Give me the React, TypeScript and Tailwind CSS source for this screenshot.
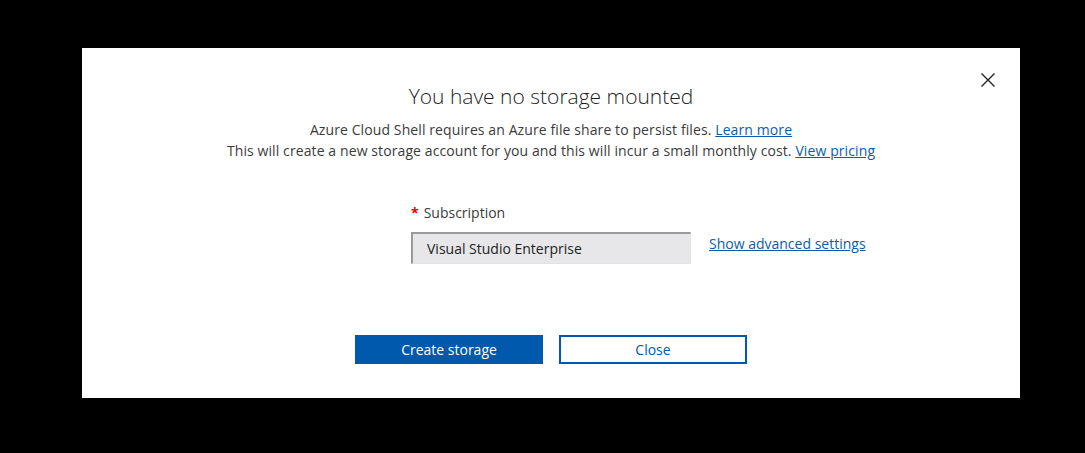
import { useState } from 'react';

export default function App() {
  const [subscription] = useState('Visual Studio Enterprise');

  return (
    <div className="w-[1085px] h-[453px] bg-black pl-[82px] pt-[48px]" style={{ fontFamily: '"Open Sans", "Noto Sans", sans-serif' }}>
      <div className="relative w-[938px] h-[350px] bg-white flex flex-col items-center pt-[34px]">
        <button className="absolute right-[24px] top-[24px] w-[16px] h-[16px] flex items-center justify-center text-[#222]" aria-label="Close">
          <svg width="16" height="16" viewBox="0 0 16 16" fill="none" stroke="currentColor" strokeWidth="1.4">
            <path d="M1.5 1.5 L14.5 14.5 M14.5 1.5 L1.5 14.5" />
          </svg>
        </button>

        <h1 className="text-[21px] leading-[28px] font-light text-[#1e1e1e]">You have no storage mounted</h1>
        <p className="mt-[9px] text-[14px] leading-[21px] tracking-[0.1px] text-[#3b3b3b] text-center">
          Azure Cloud Shell requires an Azure file share to persist files.{' '}
          <a className="text-[#0b5cad] underline">Learn more</a>
          <br />
          This will create a new storage account for you and this will incur a small monthly cost.{' '}
          <a className="text-[#0b5cad] underline">View pricing</a>
        </p>

        <div className="mt-[43px] w-full grid grid-cols-[1fr_280px_1fr]">
          <div />
          <div>
            <label className="block text-[14px] leading-[18px] text-[#3b3b3b]">
              <span className="text-[#e00] font-bold mr-[5px]">*</span>Subscription
            </label>
            <div className="mt-[10px] h-[32px] bg-[#e7e7ea] border-t-2 border-l-2 border-t-[#9a9a9a] border-l-[#9a9a9a] border-b border-r border-b-[#e2e2e2] border-r-[#e2e2e2] pl-[14px] flex items-center text-[14px] text-[#222]">
              {subscription}
            </div>
          </div>
          <div className="pl-[18px] pt-[27px]">
            <a className="text-[14px] leading-[18px] text-[#0b5cad] underline">Show advanced settings</a>
          </div>
        </div>

        <div className="mt-[71px] flex gap-[16px]">
          <button className="w-[188px] h-[29px] bg-[#0059ad] text-white text-[14px]">Create storage</button>
          <button className="w-[188px] h-[29px] border-2 border-[#0059ad] text-[#0059ad] text-[14px]">Close</button>
        </div>
      </div>
    </div>
  );
}
